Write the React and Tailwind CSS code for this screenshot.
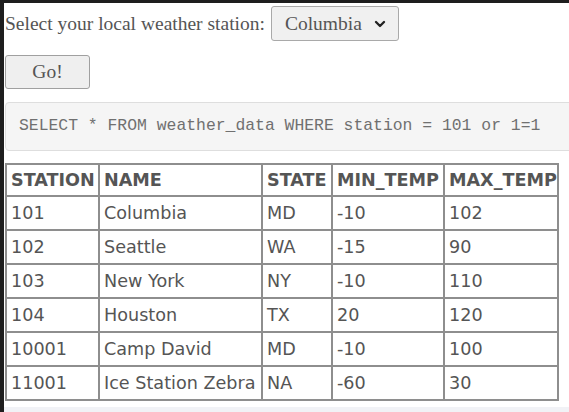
import { ChevronDown } from "lucide-react";

const rows = [
  ["101", "Columbia", "MD", "-10", "102"],
  ["102", "Seattle", "WA", "-15", "90"],
  ["103", "New York", "NY", "-10", "110"],
  ["104", "Houston", "TX", "20", "120"],
  ["10001", "Camp David", "MD", "-10", "100"],
  ["11001", "Ice Station Zebra", "NA", "-60", "30"],
];

const cols = ["STATION", "NAME", "STATE", "MIN_TEMP", "MAX_TEMP"];
const widths = ["w-[93px]", "w-[163px]", "w-[70px]", "w-[112px]", "w-[114px]"];

export default function App() {
  return (
    <div className="h-[412px] overflow-hidden bg-[#1e1e1e] pt-[3px] pl-[4px]">
      <div className="flex h-[409px] flex-col bg-white">
        <div className="flex-1 pl-[1px] text-[#555]">
          {/* station picker */}
          <div className="mt-[3px] flex items-center gap-[6px] font-['Liberation_Serif',serif] text-[19.5px]">
            <span>Select your local weather station:</span>
            <div className="flex h-[35px] w-[128px] items-center justify-between rounded-[3px] border border-[#a9a9a9] bg-[#f0f0f0] pl-[13px] pr-[10px]">
              <span>Columbia</span>
              <ChevronDown className="h-[16px] w-[16px] text-[#222]" strokeWidth={3.5} />
            </div>
          </div>

          <button className="mt-[14px] h-[34px] w-[85px] rounded-[3px] border border-[#a0a0a0] bg-[#efefef] font-['Liberation_Serif',serif] text-[19.5px] text-[#555]">
            Go!
          </button>

          {/* query preview */}
          <div className="mt-[13px] flex h-[49px] w-[580px] items-center rounded-[4px] border border-[#dedede] bg-[#f5f5f5] pl-[13px] font-['Liberation_Mono',monospace] text-[16.4px] text-[#707070]">
            SELECT * FROM weather_data WHERE station = 101 or 1=1
          </div>

          <table className="mt-[12px] table-fixed border-collapse font-['DejaVu_Sans',sans-serif] text-[17.6px] text-[#555]">
            <thead>
              <tr className="h-[32px]">
                {cols.map((c, i) => (
                  <th
                    key={c}
                    className={`${widths[i]} border-2 border-[#8e8e8e] p-0 pl-[4px] text-left font-bold whitespace-nowrap`}
                  >
                    {c}
                  </th>
                ))}
              </tr>
            </thead>
            <tbody>
              {rows.map((r) => (
                <tr key={r[0]} className="h-[34px]">
                  {r.map((v, i) => (
                    <td key={i} className="border-2 border-[#8e8e8e] p-0 pl-[4px] whitespace-nowrap">
                      {v}
                    </td>
                  ))}
                </tr>
              ))}
            </tbody>
          </table>
        </div>
        <div className="h-[5px] bg-[#f1f2f6]" />
      </div>
    </div>
  );
}
